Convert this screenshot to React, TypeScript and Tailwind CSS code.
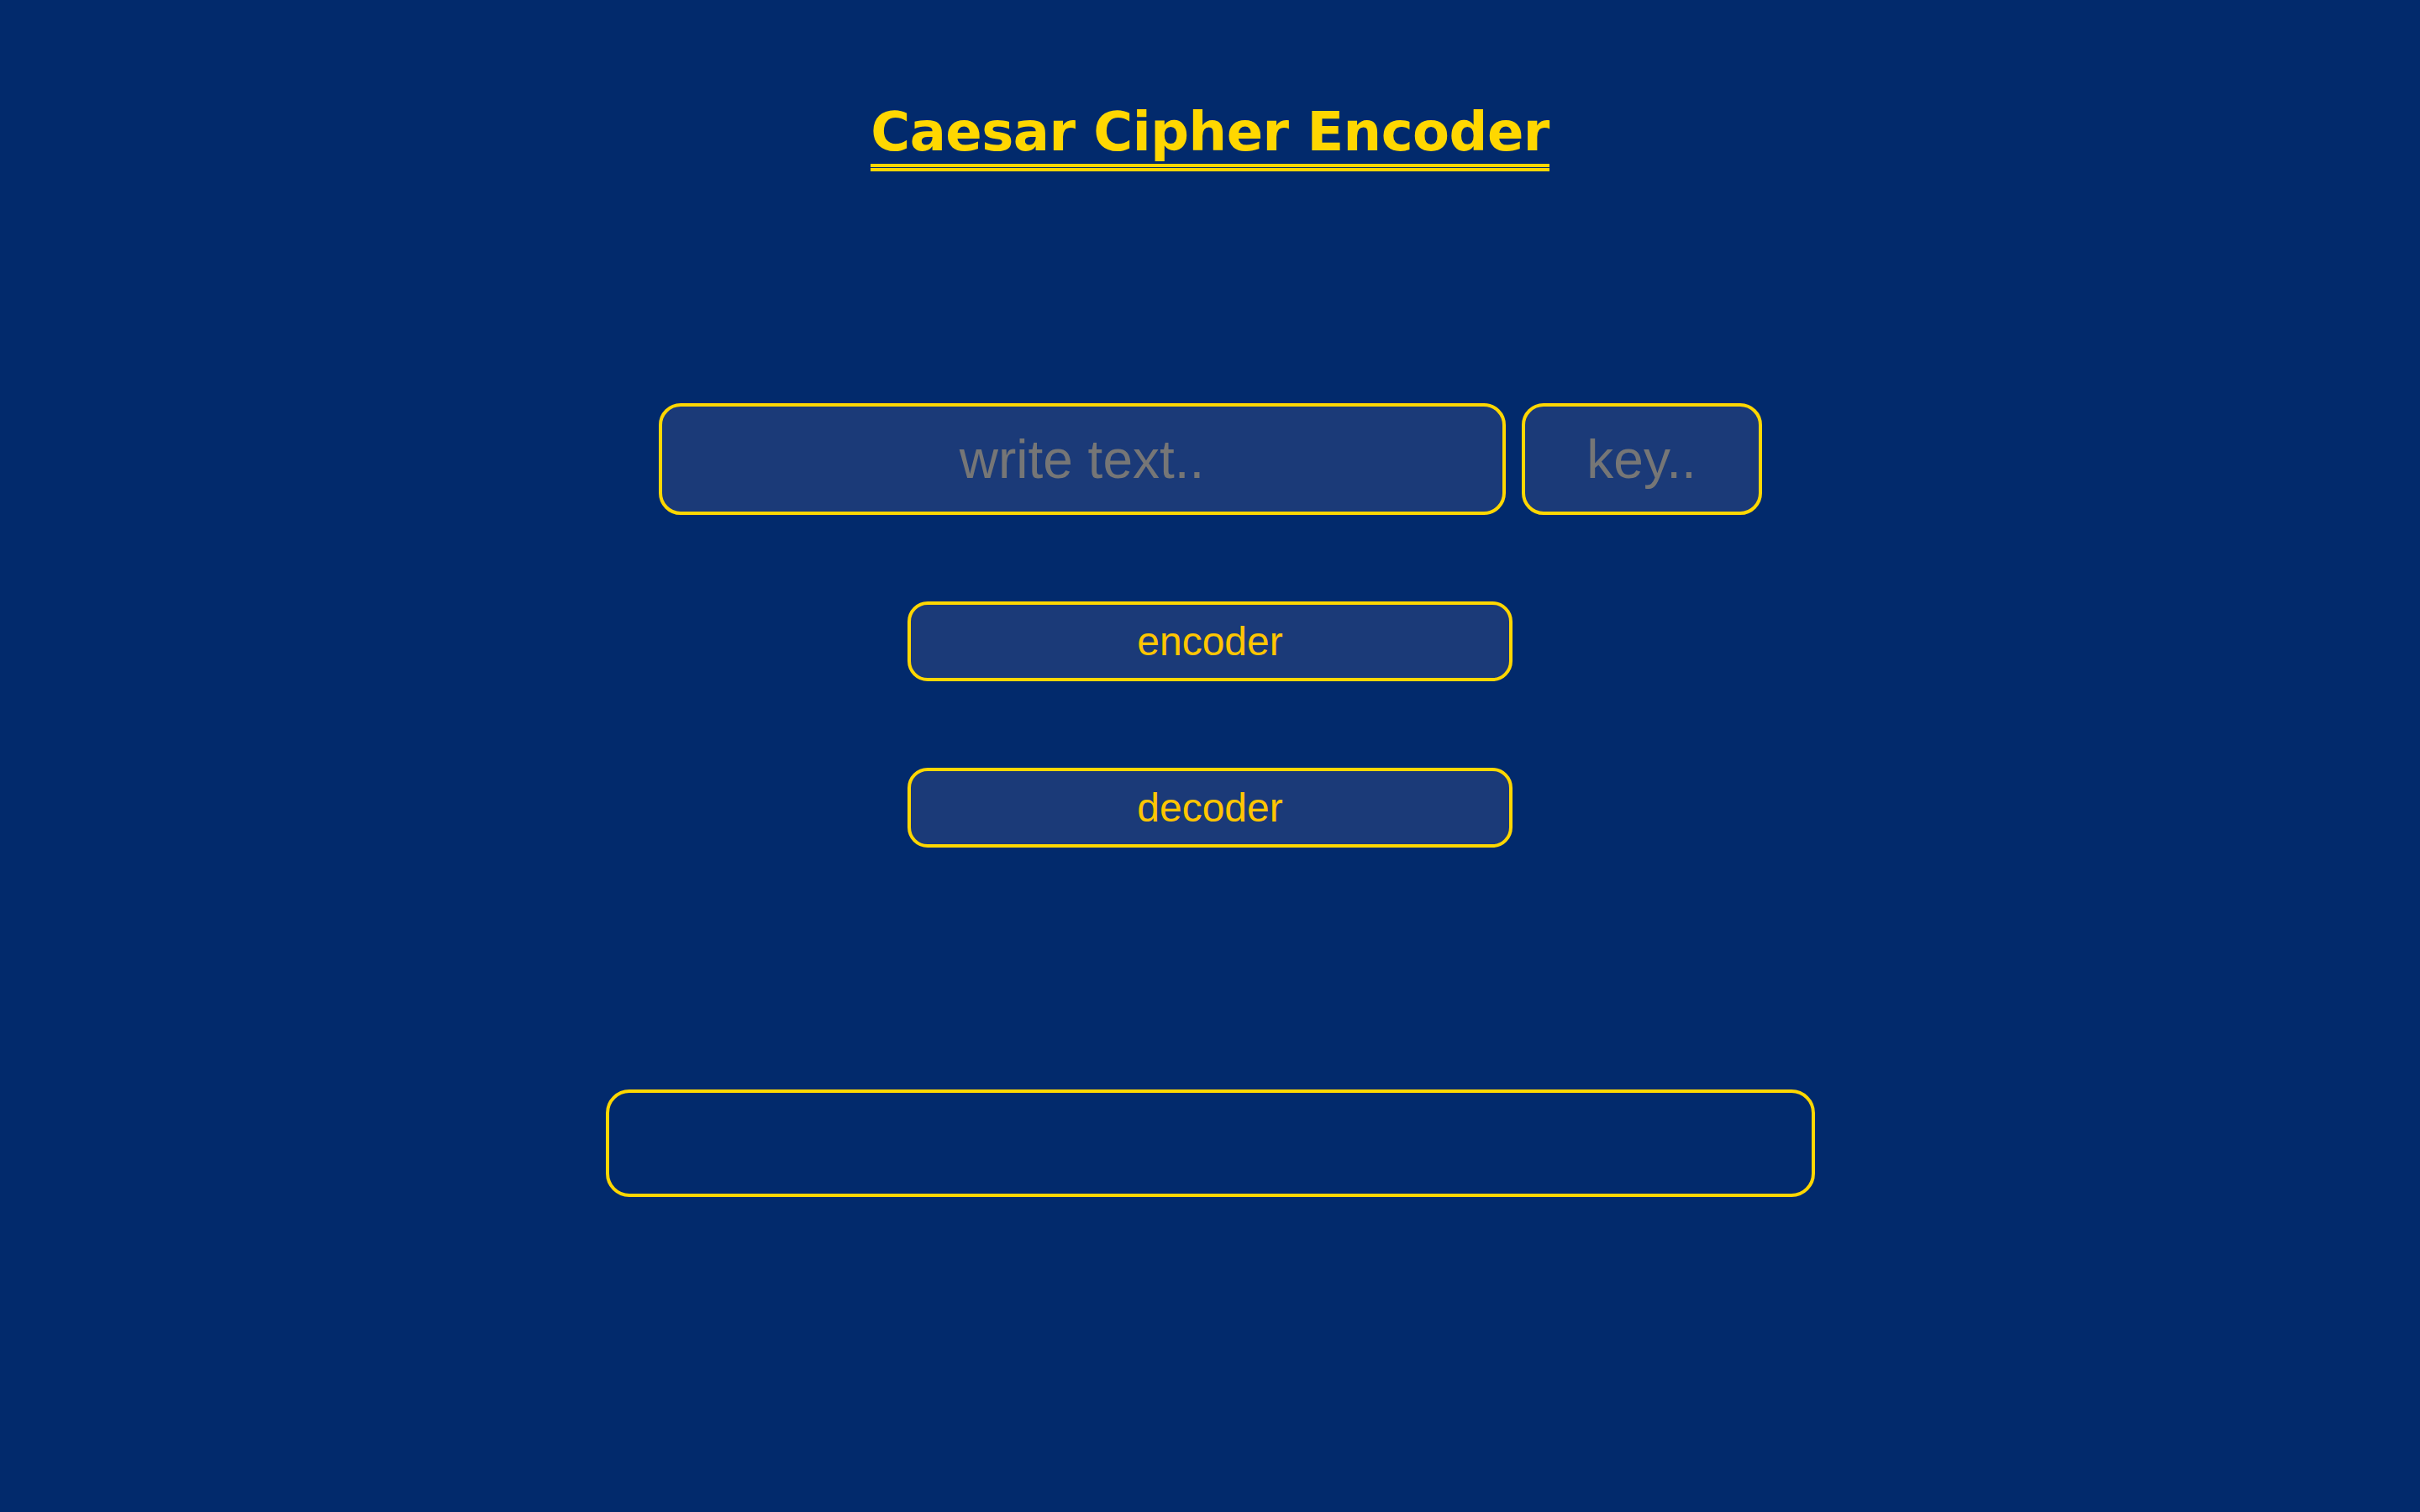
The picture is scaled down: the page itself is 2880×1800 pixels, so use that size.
import { useState } from "react";

const shift = (text: string, key: number) =>
  text.replace(/[a-z]/gi, (ch) => {
    const base = ch <= "Z" ? 65 : 97;
    return String.fromCharCode(((((ch.charCodeAt(0) - base + key) % 26) + 26) % 26) + base);
  });

export default function App() {
  const [text, setText] = useState("");
  const [key, setKey] = useState("");
  const [result, setResult] = useState("");

  const run = (dir: number) => {
    const k = parseInt(key, 10) || 0;
    setResult(shift(text, k * dir));
  };

  return (
    <div className="min-h-screen bg-[#022a6c] flex flex-col items-center pt-[125px] font-['Liberation_Sans',Arial,sans-serif]">
      <div className="inline-flex flex-col">
        <h1 className="text-[64px] leading-none font-bold text-[#ffd700] font-['DejaVu_Sans',Verdana,sans-serif] tracking-[-0.5px]">
          Caesar Cipher Encoder
        </h1>
        <div className="mt-[6px] h-[4px] bg-[#ffd700]" />
        <div className="mt-[1px] h-[4px] bg-[#ffd700]" />
      </div>

      <div className="mt-[276px] flex gap-[19px]">
        <input
          value={text}
          onChange={(e) => setText(e.target.value)}
          placeholder="write text.."
          className="w-[1008px] h-[133px] rounded-[26px] border-4 border-[#ffd700] bg-[#1b3a78] text-center text-[64px] text-[#ffc600] placeholder:text-[#767676] outline-none"
        />
        <input
          value={key}
          onChange={(e) => setKey(e.target.value)}
          placeholder="key.."
          className="w-[286px] h-[133px] rounded-[26px] border-4 border-[#ffd700] bg-[#1b3a78] text-center text-[64px] text-[#ffc600] placeholder:text-[#767676] outline-none"
        />
      </div>

      <button
        type="button"
        onClick={() => run(1)}
        className="mt-[103px] w-[720px] h-[95px] rounded-[24px] border-4 border-[#ffd700] bg-[#1b3a78] text-[48px] text-[#ffc600]"
      >
        encoder
      </button>
      <button
        type="button"
        onClick={() => run(-1)}
        className="mt-[103px] w-[720px] h-[95px] rounded-[24px] border-4 border-[#ffd700] bg-[#1b3a78] text-[48px] text-[#ffc600]"
      >
        decoder
      </button>

      <div className="mt-[288px] w-[1439px] h-[128px] rounded-[28px] border-4 border-[#ffd700] flex items-center justify-center text-[48px] text-[#ffc600]">
        {result}
      </div>
    </div>
  );
}
